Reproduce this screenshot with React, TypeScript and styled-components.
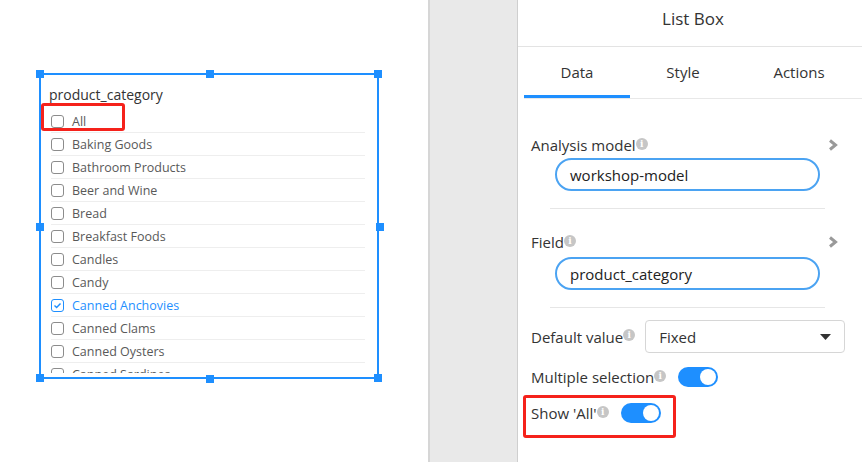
import React from "react";
import styled, { createGlobalStyle } from "styled-components";

const Global = createGlobalStyle`
  html, body { margin: 0; padding: 0; background: #fff; }
  body { font-family: "Open Sans", "Noto Sans", Arial, sans-serif; overflow: hidden; }
  * { box-sizing: border-box; }
`;

const Page = styled.div`
  display: flex;
  width: 862px;
  height: 462px;
  overflow: hidden;
`;

const Canvas = styled.div`
  width: 428px;
  flex: none;
  background: #fff;
  padding: 73px 0 0 39px;
`;

const Frame = styled.div`
  position: relative;
  width: 340px;
  height: 306px;
  border: 2px solid #1e8fff;
  padding: 10px 12px 0 8px;
  display: flex;
  flex-direction: column;
`;

const Handle = styled.span<{ $x: string; $y: string }>`
  position: absolute;
  width: 8px;
  height: 8px;
  background: #1e8fff;
  left: ${(p) => p.$x};
  top: ${(p) => p.$y};
`;

const Highlight = styled.div<{ $l: number; $t: number; $w: number; $h: number }>`
  position: absolute;
  left: ${(p) => p.$l}px;
  top: ${(p) => p.$t}px;
  width: ${(p) => p.$w}px;
  height: ${(p) => p.$h}px;
  border: 3px solid #f5221b;
  border-radius: 3px;
  pointer-events: none;
`;

const ListTitle = styled.div`
  font-size: 14px;
  line-height: 20px;
  color: #333;
  margin-bottom: 5px;
`;

const List = styled.div`
  height: 263px;
  overflow: hidden;
`;

const Row = styled.div<{ $checked?: boolean }>`
  display: flex;
  align-items: center;
  gap: 8px;
  height: 23px;
  margin-left: 2px;
  border-bottom: 1px solid #eeeeee;
  font-size: 12.5px;
  color: ${(p) => (p.$checked ? "#1e8fff" : "#595959")};
  white-space: nowrap;
`;

const Box = styled.span<{ $checked?: boolean }>`
  width: 13px;
  height: 13px;
  flex: none;
  border: 1px solid ${(p) => (p.$checked ? "#1e8fff" : "#8c8c8c")};
  border-radius: 3px;
  display: flex;
  align-items: center;
  justify-content: center;
`;

const Strip = styled.div`
  width: 90px;
  flex: none;
  background: #e9e9e9;
  border-left: 2px solid #d6d6d6;
  border-right: 1px solid #cfcfcf;
`;

const Panel = styled.div`
  flex: 1;
  background: #fff;
  position: relative;
  display: flex;
  flex-direction: column;
`;

const Header = styled.div`
  height: 47px;
  border-bottom: 1px solid #e3e3e3;
  display: flex;
  align-items: flex-start;
  justify-content: center;
  font-size: 17px;
  line-height: 24px;
  padding-top: 7px;
  color: #333;
  padding-left: 6px;
`;

const Tabs = styled.div`
  display: flex;
  margin-left: 6px;
  height: 52px;
  border-bottom: 1px solid #e8e8e8;
`;

const Tab = styled.div<{ $w: number; $active?: boolean }>`
  width: ${(p) => p.$w}px;
  display: flex;
  align-items: center;
  justify-content: center;
  font-size: 15px;
  color: #333;
  border-bottom: 3px solid ${(p) => (p.$active ? "#1e8fff" : "transparent")};
  padding-top: 2px;
`;

const Form = styled.div`
  padding: 34px 0 0 13px;
  display: flex;
  flex-direction: column;
`;

const Section = styled.div<{ $mt: number }>`
  display: flex;
  flex-direction: column;
  margin-top: ${(p) => p.$mt}px;
`;

const LabelRow = styled.div`
  display: flex;
  align-items: center;
  justify-content: space-between;
  padding-right: 24px;
  height: 24px;
`;

const Label = styled.span`
  font-size: 15px;
  color: #333;
  display: inline-flex;
  align-items: center;
  white-space: nowrap;
`;

const Info = styled.span`
  width: 12px;
  height: 12px;
  border-radius: 50%;
  background: #c6c6c6;
  color: #fff;
  font-size: 9px;
  font-weight: 700;
  line-height: 12px;
  text-align: center;
  font-family: "DejaVu Serif", serif;
  margin-top: -3px;
  flex: none;
`;

const Pill = styled.div<{ $mt: number }>`
  margin: ${(p) => p.$mt}px 0 0 24px;
  width: 265px;
  height: 33px;
  border: 2px solid #4ba3f2;
  border-radius: 17px;
  display: flex;
  align-items: center;
  padding-left: 13px;
  font-size: 15px;
  color: #222;
`;

const Divider = styled.div`
  margin: 17px 0 0 19px;
  width: 275px;
  height: 1px;
  background: #e6e6e6;
`;

const InlineRow = styled.div<{ $mt: number; $gap: number }>`
  display: flex;
  align-items: center;
  gap: ${(p) => p.$gap}px;
  margin-top: ${(p) => p.$mt}px;
`;

const Select = styled.div`
  width: 200px;
  height: 33px;
  border: 1px solid #d6d6d6;
  border-radius: 4px;
  display: flex;
  align-items: center;
  justify-content: space-between;
  padding: 0 13px 0 13px;
  font-size: 15px;
  color: #333;
`;

const Toggle = styled.span`
  width: 40px;
  height: 20px;
  border-radius: 10px;
  background: #1e8fff;
  display: flex;
  align-items: center;
  justify-content: flex-end;
  padding-right: 2px;
  flex: none;
  &::after {
    content: "";
    width: 16px;
    height: 16px;
    border-radius: 50%;
    background: #fff;
  }
`;

const Chevron = () => (
  <svg width="10" height="12" viewBox="0 0 10 12">
    <path d="M2 1.5 L7.5 6 L2 10.5" fill="none" stroke="#999" strokeWidth="3" />
  </svg>
);

const Check = () => (
  <svg width="9" height="9" viewBox="0 0 9 9">
    <path d="M1.5 4.6 L3.6 6.6 L7.5 2.4" fill="none" stroke="#1e8fff" strokeWidth="1.4" />
  </svg>
);

const Caret = () => (
  <svg width="11" height="6" viewBox="0 0 11 6">
    <path d="M0 0 H11 L5.5 6 Z" fill="#333" />
  </svg>
);

const items = [
  "All",
  "Baking Goods",
  "Bathroom Products",
  "Beer and Wine",
  "Bread",
  "Breakfast Foods",
  "Candles",
  "Candy",
  "Canned Anchovies",
  "Canned Clams",
  "Canned Oysters",
  "Canned Sardines",
];

export default function App() {
  return (
    <>
      <Global />
      <Page>
        <Canvas>
          <Frame>
            <Handle $x="-5px" $y="-5px" />
            <Handle $x="165px" $y="-5px" />
            <Handle $x="333px" $y="-5px" />
            <Handle $x="-5px" $y="148px" />
            <Handle $x="335px" $y="148px" />
            <Handle $x="-5px" $y="299px" />
            <Handle $x="165px" $y="300px" />
            <Handle $x="333px" $y="299px" />
            <ListTitle>product_category</ListTitle>
            <List>
              {items.map((t) => {
                const c = t === "Canned Anchovies";
                return (
                  <Row key={t} $checked={c}>
                    <Box $checked={c}>{c && <Check />}</Box>
                    {t}
                  </Row>
                );
              })}
            </List>
            <Highlight $l={0} $t={28} $w={84} $h={28} />
          </Frame>
        </Canvas>
        <Strip />
        <Panel>
          <Header>List Box</Header>
          <Tabs>
            <Tab $w={106} $active>Data</Tab>
            <Tab $w={106}>Style</Tab>
            <Tab $w={126}>Actions</Tab>
          </Tabs>
          <Form>
            <Section $mt={0}>
              <LabelRow>
                <Label>
                  Analysis model<Info>i</Info>
                </Label>
                <Chevron />
              </LabelRow>
              <Pill $mt={1}>workshop-model</Pill>
              <Divider />
            </Section>
            <Section $mt={21}>
              <LabelRow>
                <Label>
                  Field<Info>i</Info>
                </Label>
                <Chevron />
              </LabelRow>
              <Pill $mt={3}>product_category</Pill>
              <Divider />
            </Section>
            <InlineRow $mt={12} $gap={10}>
              <Label>
                Default value<Info>i</Info>
              </Label>
              <Select>
                Fixed
                <Caret />
              </Select>
            </InlineRow>
            <InlineRow $mt={14} $gap={12}>
              <Label>
                Multiple selection<Info>i</Info>
              </Label>
              <Toggle />
            </InlineRow>
            <InlineRow $mt={16} $gap={12}>
              <Label>
                Show 'All'<Info>i</Info>
              </Label>
              <Toggle />
            </InlineRow>
          </Form>
          <Highlight $l={5} $t={395} $w={153} $h={43} />
        </Panel>
      </Page>
    </>
  );
}
